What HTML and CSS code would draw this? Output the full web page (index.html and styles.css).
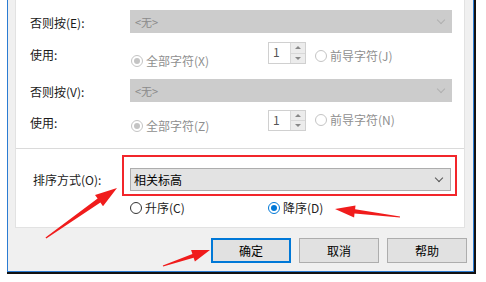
FILE: index.html
```html
<!DOCTYPE html>
<html>
<head>
  <link rel="stylesheet" href="styles.css">
</head>
<body>
  <div class="window">
    <div class="frame">
      <div class="panel">
        <div class="upper">
          <div class="row row-combo">
            <span class="label">否则按(E):</span>
            <div class="combo combo-off"><span>&lt;无&gt;</span><span class="chev"></span></div>
          </div>
          <div class="row row-use row-use-a">
            <span class="label">使用:</span>
            <span class="radio-group"><span class="radio off-on"></span><span class="dim">全部字符(X)</span></span>
            <div class="spin"><span class="spin-val">1</span><span class="spin-btns"><span class="up"></span><span class="down"></span></span></div>
            <span class="radio-lead"><span class="radio off"></span><span class="dim">前导字符(J)</span></span>
          </div>
          <div class="row row-combo row-combo-b">
            <span class="label">否则按(V):</span>
            <div class="combo combo-off"><span>&lt;无&gt;</span><span class="chev"></span></div>
          </div>
          <div class="row row-use row-use-b">
            <span class="label">使用:</span>
            <span class="radio-group"><span class="radio off-on"></span><span class="dim">全部字符(Z)</span></span>
            <div class="spin"><span class="spin-val">1</span><span class="spin-btns"><span class="up"></span><span class="down"></span></span></div>
            <span class="radio-lead"><span class="radio off"></span><span class="dim">前导字符(N)</span></span>
          </div>
        </div>
        <div class="sort">
          <div class="row row-sort">
            <span class="label label-sort">排序方式(O):</span>
            <div class="combo combo-on"><span>相关标高</span><span class="chev dark"></span></div>
          </div>
          <div class="row row-order">
            <span class="order-item"><span class="radio"></span>升序(C)</span>
            <span class="order-item"><span class="radio checked"></span>降序(D)</span>
          </div>
          <div class="mark"></div>
        </div>
      </div>
      <div class="buttons">
        <button class="btn btn-default">确定</button>
        <button class="btn">取消</button>
        <button class="btn">帮助</button>
      </div>
    </div>
  </div>

  <!-- red annotation arrows -->
  <svg class="arrows" width="486" height="282" viewBox="0 0 486 282">
    <polygon points="117,188 103,206.3 100.4,202.6 46.3,238.6 45.5,237.4 97.6,198.6 95,194.9" />
    <polygon points="335,209 355.5,205.4 355.1,209.2 400.1,216.4 399.9,217.6 354.5,213.6 354.1,217.4" />
    <polygon points="210,250 194.9,261.5 193.6,257.7 163.2,266.6 162.8,265.4 192.4,253.9 191.1,250.1" />
  </svg>
</body>
</html>
```

FILE: styles.css
```css
body {
  margin: 0;
  width: 486px;
  height: 282px;
  background: #fff;
  position: relative;
  overflow: hidden;
  font-family: "Noto Sans CJK SC", "Microsoft YaHei", sans-serif;
  font-size: 12px;
  color: #1a1a1a;
}

.window {
  margin-left: 7px;
  width: 467px;
  border-right: 2px solid #111;
  border-bottom: 2px solid #111;
}

.frame {
  background: #f0f0f0;
  border-left: 1px solid #2b7cd3;
  border-right: 1px solid #2b7cd3;
  border-bottom: 1px solid #2b7cd3;
  padding: 0 0 8px 7px;
}

.panel {
  width: 450px;
  height: 228px;
  box-sizing: border-box;
  background: #fff;
  border: 1px solid #e2e2e2;
  border-top: none;
}

.upper {
  height: 149px;
  box-sizing: border-box;
  border-bottom: 1px solid #dadada;
  padding: 10px 0 0 14px;
}

.row {
  display: flex;
  align-items: flex-start;
}

.label {
  width: 100px;
  flex-shrink: 0;
  line-height: 16px;
}

.row-combo {
  height: 23px;
}

.row-combo .label {
  margin-top: 5px;
}

.row-combo-b {
  margin-top: 15px;
}

.combo {
  height: 23px;
  box-sizing: border-box;
  display: flex;
  align-items: center;
  justify-content: space-between;
  position: relative;
}

.combo-off {
  width: 322px;
  background: #cccccc;
  color: #8a8a8a;
  font-size: 11px;
  padding: 0 8px 0 5px;
}

.combo-on {
  width: 321px;
  background: #e3e3e3;
  border: 1px solid #adadad;
  color: #000;
  padding: 0 8px 0 3px;
}

.chev {
  width: 5px;
  height: 5px;
  border-right: 1px solid #b0b0b0;
  border-bottom: 1px solid #b0b0b0;
  transform: rotate(45deg);
  margin-top: -4px;
}

.chev.dark {
  border-color: #555;
}

.row-use {
  height: 22px;
  margin-top: 9px;
}

.row-use-b {
  height: 21px;
  margin-top: 8px;
}

.row-use .label {
  margin-top: 5px;
}

.radio-group {
  width: 137px;
  margin-left: 1px;
  display: flex;
  align-items: center;
  line-height: 16px;
  margin-top: 11px;
}

.row-use-b .radio-group {
  margin-top: 8px;
}

.radio {
  width: 12px;
  height: 12px;
  box-sizing: border-box;
  border: 1px solid #333;
  border-radius: 50%;
  margin-right: 3px;
  position: relative;
  flex-shrink: 0;
}

.radio.off,
.radio.off-on {
  border-color: #c4c4c4;
}

.radio.off-on::after,
.radio.checked::after {
  content: "";
  position: absolute;
  left: 2px;
  top: 2px;
  width: 6px;
  height: 6px;
  border-radius: 50%;
  background: #c4c4c4;
}

.radio.checked {
  border-color: #0078d7;
}

.radio.checked::after {
  background: #0078d7;
}

.dim {
  color: #8f8f8f;
}

.spin {
  width: 38px;
  height: 22px;
  display: flex;
  box-sizing: border-box;
  border: 1px solid #d0d0d0;
  background: #fff;
}

.row-use-b .spin {
  height: 21px;
}

.spin-val {
  flex: 1;
  padding-left: 4px;
  line-height: 18px;
  color: #555;
}

.spin-btns {
  width: 14px;
  display: flex;
  flex-direction: column;
  border-left: 1px solid #d8d8d8;
  background: #ececec;
}

.spin-btns span {
  flex: 1;
  position: relative;
}

.spin-btns .up {
  border-bottom: 1px solid #d8d8d8;
}

.spin-btns .up::after,
.spin-btns .down::after {
  content: "";
  position: absolute;
  left: 4px;
  width: 0;
  height: 0;
  border-left: 3px solid transparent;
  border-right: 3px solid transparent;
}

.spin-btns .up::after {
  top: 3px;
  border-bottom: 3px solid #888;
}

.spin-btns .down::after {
  top: 3px;
  border-top: 3px solid #888;
}

.radio-lead {
  display: flex;
  align-items: center;
  margin-left: 9px;
  line-height: 16px;
  margin-top: 6px;
}

.row-use-b .radio-lead {
  margin-top: 2px;
}

.sort {
  position: relative;
  height: 78px;
  padding: 19px 0 0 17px;
  box-sizing: border-box;
}

.row-sort {
  height: 23px;
}

.label-sort {
  width: 97px;
  margin-top: 4px;
  color: #222;
}

.row-order {
  margin-top: 10px;
  padding-left: 97px;
  height: 14px;
  align-items: center;
  line-height: 14px;
}

.order-item {
  display: flex;
  align-items: center;
  width: 138px;
  color: #222;
}

.mark {
  position: absolute;
  left: 106px;
  top: 6px;
  width: 335px;
  height: 41px;
  box-sizing: border-box;
  border: 2px solid #f2262b;
}

.buttons {
  display: flex;
  justify-content: flex-end;
  gap: 8px;
  padding-right: 6px;
  margin-top: 10px;
}

.btn {
  width: 80px;
  height: 25px;
  box-sizing: border-box;
  border: 1px solid #adadad;
  background: #e1e1e1;
  font-family: inherit;
  font-size: 12px;
  color: #000;
  padding: 0;
}

.btn-default {
  border: 2px solid #0078d7;
}

.arrows {
  position: absolute;
  left: 0;
  top: 0;
  pointer-events: none;
}

.arrows polygon {
  fill: #f01c1c;
}
```
